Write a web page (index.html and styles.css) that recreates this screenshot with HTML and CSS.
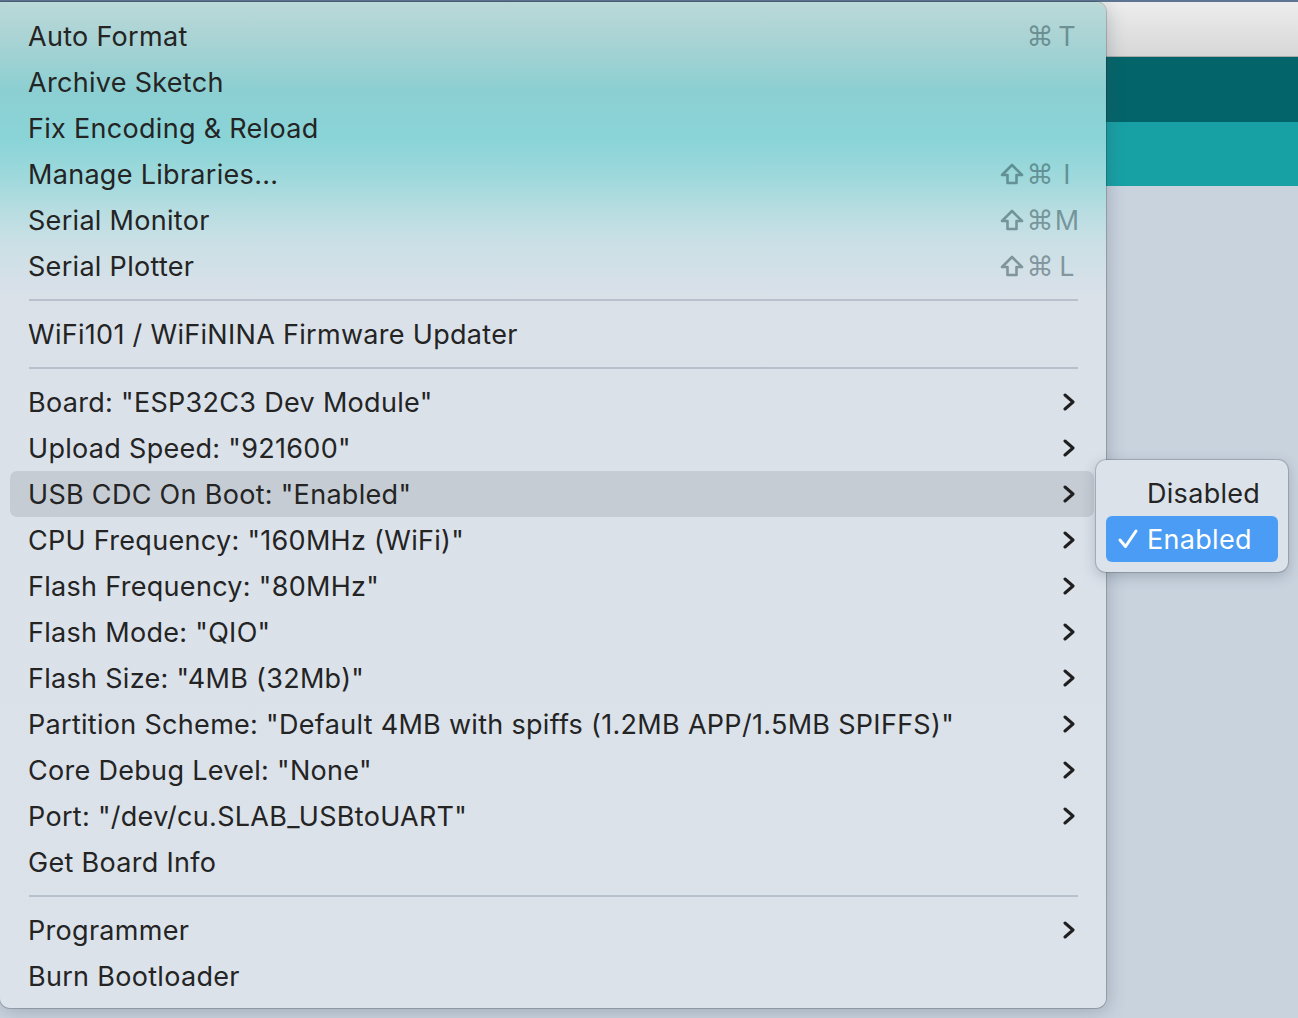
FILE: index.html
```html
<!DOCTYPE html>
<html>
<head>
<meta charset="utf-8">
<link rel="stylesheet" href="styles.css">
</head>
<body>
<div class="desk">
  <div class="topline"></div>
  <div class="titlebar"></div>
  <div class="toolbar-dark"></div>
  <div class="toolbar-light"></div>
  <div class="editor"></div>
</div>

<div class="menu">
  <div class="item"><span class="label">Auto Format</span><span class="keys"><span class="k-shift"></span><span class="k-cmd">⌘</span><span class="k-key">T</span></span></div>
  <div class="item"><span class="label">Archive Sketch</span></div>
  <div class="item"><span class="label">Fix Encoding &amp; Reload</span></div>
  <div class="item"><span class="label">Manage Libraries...</span><span class="keys"><span class="k-shift"><svg viewBox="0 0 24 22"><polygon points="12,2 22,12 16.5,12 16.5,20 7.5,20 7.5,12 2,12"/></svg></span><span class="k-cmd">⌘</span><span class="k-key">I</span></span></div>
  <div class="item"><span class="label">Serial Monitor</span><span class="keys"><span class="k-shift"><svg viewBox="0 0 24 22"><polygon points="12,2 22,12 16.5,12 16.5,20 7.5,20 7.5,12 2,12"/></svg></span><span class="k-cmd">⌘</span><span class="k-key">M</span></span></div>
  <div class="item"><span class="label">Serial Plotter</span><span class="keys"><span class="k-shift"><svg viewBox="0 0 24 22"><polygon points="12,2 22,12 16.5,12 16.5,20 7.5,20 7.5,12 2,12"/></svg></span><span class="k-cmd">⌘</span><span class="k-key">L</span></span></div>
  <div class="sep"></div>
  <div class="item"><span class="label">WiFi101 / WiFiNINA Firmware Updater</span></div>
  <div class="sep"></div>
  <div class="item"><span class="label">Board: "ESP32C3 Dev Module"</span><svg class="chev" viewBox="0 0 14 18"><polyline points="3,2 11,9 3,16"/></svg></div>
  <div class="item"><span class="label">Upload Speed: "921600"</span><svg class="chev" viewBox="0 0 14 18"><polyline points="3,2 11,9 3,16"/></svg></div>
  <div class="item active"><span class="label">USB CDC On Boot: "Enabled"</span><svg class="chev" viewBox="0 0 14 18"><polyline points="3,2 11,9 3,16"/></svg></div>
  <div class="item"><span class="label">CPU Frequency: "160MHz (WiFi)"</span><svg class="chev" viewBox="0 0 14 18"><polyline points="3,2 11,9 3,16"/></svg></div>
  <div class="item"><span class="label">Flash Frequency: "80MHz"</span><svg class="chev" viewBox="0 0 14 18"><polyline points="3,2 11,9 3,16"/></svg></div>
  <div class="item"><span class="label">Flash Mode: "QIO"</span><svg class="chev" viewBox="0 0 14 18"><polyline points="3,2 11,9 3,16"/></svg></div>
  <div class="item"><span class="label">Flash Size: "4MB (32Mb)"</span><svg class="chev" viewBox="0 0 14 18"><polyline points="3,2 11,9 3,16"/></svg></div>
  <div class="item"><span class="label">Partition Scheme: "Default 4MB with spiffs (1.2MB APP/1.5MB SPIFFS)"</span><svg class="chev" viewBox="0 0 14 18"><polyline points="3,2 11,9 3,16"/></svg></div>
  <div class="item"><span class="label">Core Debug Level: "None"</span><svg class="chev" viewBox="0 0 14 18"><polyline points="3,2 11,9 3,16"/></svg></div>
  <div class="item"><span class="label">Port: "/dev/cu.SLAB_USBtoUART"</span><svg class="chev" viewBox="0 0 14 18"><polyline points="3,2 11,9 3,16"/></svg></div>
  <div class="item"><span class="label">Get Board Info</span></div>
  <div class="sep"></div>
  <div class="item"><span class="label">Programmer</span><svg class="chev" viewBox="0 0 14 18"><polyline points="3,2 11,9 3,16"/></svg></div>
  <div class="item"><span class="label">Burn Bootloader</span></div>
</div>

<div class="submenu">
  <div class="sub-item"><span class="check"></span><span class="label">Disabled</span></div>
  <div class="sub-item selected"><span class="check"><svg viewBox="0 0 22 22"><polyline points="3,12 8.5,18.5 19,3"/></svg></span><span class="label">Enabled</span></div>
</div>
</body>
</html>
```

FILE: styles.css
```css
html, body {
  margin: 0;
  padding: 0;
}
body {
  width: 1298px;
  height: 1018px;
  overflow: hidden;
  position: relative;
  font-family: Inter, "Noto Sans", "Liberation Sans", sans-serif;
  background: #c9d3de;
}
.desk {
  display: flex;
  flex-direction: column;
  height: 1018px;
}
.topline {
  height: 2px;
  background: #5d7592;
}
.titlebar {
  height: 54px;
  background: linear-gradient(#ededed, #d7d7d7);
  border-bottom: 1px solid #ababab;
}
.toolbar-dark {
  height: 65px;
  background: #036569;
}
.toolbar-light {
  height: 64px;
  background: #17a1a5;
}
.editor {
  flex: 1;
  background: #c9d3de;
}

.menu {
  position: absolute;
  left: 0;
  top: 2px;
  width: 1106px;
  height: 1006px;
  box-sizing: border-box;
  padding: 11px 0 9px;
  border-radius: 0 10px 10px 10px;
  background: linear-gradient(
    #bbd9d9 0px,
    #a9d3d4 38px,
    #8ccfd2 88px,
    #8ad4d8 138px,
    #a0d9dc 178px,
    #b7dde1 208px,
    #cae0e6 240px,
    #d6e0e8 280px,
    #dae1e9 300px,
    #dbe2ea 1006px
  );
  box-shadow: 0 0 0 1px rgba(0, 0, 0, 0.18), 2px 4px 18px rgba(60, 75, 95, 0.28);
  color: #242424;
  font-size: 27px;
  letter-spacing: 0.3px;
}
.item {
  height: 46px;
  display: flex;
  align-items: center;
  margin: 0 12px 0 10px;
  padding-left: 18px;
  padding-right: 16px;
  border-radius: 7px;
}
.item.active {
  background: #c5ccd4;
}
.label {
  flex: 1;
  white-space: nowrap;
}
.keys {
  display: flex;
  align-items: center;
  margin-right: -2px;
  color: rgba(15, 45, 50, 0.42);
  font-family: "DejaVu Sans", sans-serif;
  font-size: 27px;
  letter-spacing: 0;
}
.k-shift {
  width: 28px;
  height: 24px;
  display: flex;
  justify-content: center;
  align-items: center;
}
.k-shift svg {
  width: 24px;
  height: 22px;
  fill: none;
  stroke: currentColor;
  stroke-width: 2.6;
  stroke-linejoin: round;
}
.k-cmd {
  width: 28px;
  text-align: center;
}
.k-key {
  width: 26px;
  text-align: center;
  font-family: Inter, "Noto Sans", sans-serif;
  font-size: 27px;
}
.chev {
  width: 14px;
  height: 18px;
  fill: none;
  stroke: #1f1f1f;
  stroke-width: 3;
  stroke-linecap: round;
  stroke-linejoin: round;
  margin-right: 2px;
}
.sep {
  height: 22px;
  display: flex;
  flex-direction: column;
  padding: 0 28px 0 29px;
}
.sep::before {
  content: "";
  margin-top: 10px;
  height: 2px;
  background: rgba(120, 135, 150, 0.35);
}

.submenu {
  position: absolute;
  left: 1096px;
  top: 460px;
  width: 192px;
  height: 112px;
  box-sizing: border-box;
  padding: 10px 10px 10px;
  border-radius: 10px;
  background: #dbe2ea;
  box-shadow: 0 0 0 1px rgba(0, 0, 0, 0.16), 0 4px 14px rgba(60, 75, 95, 0.3);
  font-size: 27px;
  letter-spacing: 0.3px;
  color: #242424;
}
.sub-item {
  height: 46px;
  display: flex;
  align-items: center;
  border-radius: 6px;
}
.sub-item.selected {
  background: #4a9cf4;
  color: #ffffff;
}
.check {
  width: 41px;
  display: flex;
  justify-content: center;
  padding-left: 2px;
  box-sizing: border-box;
}
.check svg {
  width: 22px;
  height: 22px;
  fill: none;
  stroke: #ffffff;
  stroke-width: 3;
  stroke-linecap: round;
  stroke-linejoin: round;
}
```
